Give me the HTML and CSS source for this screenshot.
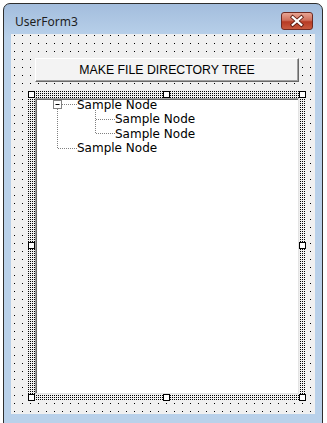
FILE: index.html
```html
<!DOCTYPE html>
<html>
<head>
<link rel="stylesheet" href="styles.css">
</head>
<body>

<div class="window">
  <div class="titlebar">
    <span class="title">UserForm3</span>
    <div class="close">
      <svg width="31" height="16" viewBox="0 0 31 16">
        <path d="M11 4 L20 12 M20 4 L11 12" stroke="#5a1a10" stroke-width="4" stroke-linecap="square"/>
        <path d="M11 4 L20 12 M20 4 L11 12" stroke="#ffffff" stroke-width="2.2" stroke-linecap="square"/>
      </svg>
    </div>
  </div>

  <div class="client">
    <div class="button">MAKE FILE DIRECTORY TREE</div>

    <div class="selection">
      <div class="tree">
        <svg class="lines" width="260" height="60">
          <g stroke="#808080" stroke-dasharray="1 1" fill="none">
            <path d="M25 4.5 H40"/>
            <path d="M20.5 9 V48"/>
            <path d="M21 48.5 H40"/>
            <path d="M58.5 10 V33"/>
            <path d="M59 19.5 H78"/>
            <path d="M59 33.5 H78"/>
          </g>
          <rect x="16.5" y="0.5" width="8" height="8" fill="#fff" stroke="#808080"/>
          <path d="M18.5 4.5 H22.5" stroke="#000"/>
        </svg>
        <div class="node root">Sample Node</div>
        <div class="node child">Sample Node</div>
        <div class="node child">Sample Node</div>
        <div class="node root">Sample Node</div>
      </div>
      <span class="handle tl"></span>
      <span class="handle tc"></span>
      <span class="handle tr"></span>
      <span class="handle ml"></span>
      <span class="handle mr"></span>
      <span class="handle bl"></span>
      <span class="handle bc"></span>
      <span class="handle br"></span>
    </div>
  </div>
</div>

</body>
</html>
```

FILE: styles.css
```css
body {
	margin: 0;
	background-color: #ffffff;
}

.window {
	margin: 3px 0 0 3px;
	width: 304px;
	height: 417px;
	padding: 0 7px 7px 7px;
	border: 1px solid #2e2e2e;
	border-radius: 7px 7px 0 0;
	background: linear-gradient(#a3bddd, #b9d1ea 34px);
	box-shadow: inset 0 -1px 0 #3fc6e6;
	display: flex;
	flex-direction: column;
}

.titlebar {
	height: 30px;
	display: flex;
	align-items: flex-start;
	justify-content: space-between;
}

.title {
	margin: 11px 0 0 4px;
	font-family: "Noto Sans", sans-serif;
	font-size: 12px;
	color: #1e1e1e;
	line-height: 14px;
}

.close {
	margin: 8px 2px 0 0;
	width: 30px;
	height: 16px;
	border: 1px solid #6e2a22;
	border-radius: 3px;
	background: linear-gradient(#e8a493, #d0705c 45%, #b73b24 55%, #c95a3f);
	display: flex;
}

.close svg {
	display: block;
}

.client {
	height: 380px;
	box-sizing: border-box;
	padding: 24px 0 0 17px;
	background-color: #f0f0f0;
	background-image:
		linear-gradient(to right, transparent 1px, #f0f0f0 1px),
		linear-gradient(to bottom, #000000 1px, #f0f0f0 1px);
	background-size: 8px 8px;
	background-position: 3px 1px;
}

.button {
	margin-left: 7px;
	width: 262px;
	height: 22px;
	border: 1px solid;
	border-color: #ffffff #696969 #696969 #ffffff;
	box-shadow: inset -1px -1px 0 #a0a0a0;
	background-color: #f3f3f3;
	font-family: "Liberation Sans", Arial, sans-serif;
	font-size: 12.3px;
	line-height: 22px;
	text-align: center;
	color: #000000;
}

.selection {
	position: relative;
	margin-top: 9px;
	width: 278px;
	height: 310px;
	box-sizing: border-box;
	padding: 7px;
	background-color: #f0f0f0;
	background-image:
		linear-gradient(to right, transparent 1px, #f0f0f0 1px),
		linear-gradient(to bottom, #000000 1px, #f0f0f0 1px);
	background-size: 2px 2px;
}

.tree {
	position: relative;
	height: 100%;
	box-sizing: border-box;
	border-top: 1px solid #a0a0a0;
	border-left: 1px solid #a0a0a0;
	border-right: 1px solid #e3e3e3;
	border-bottom: 1px solid #e3e3e3;
	box-shadow: inset 1px 1px 0 #696969;
	background-color: #ffffff;
	padding-top: 1px;
	font-family: "DejaVu Sans", sans-serif;
	font-size: 12px;
	color: #000000;
}

.lines {
	position: absolute;
	left: 1px;
	top: 1px;
}

.node {
	position: relative;
	line-height: 14.33px;
	height: 14.33px;
}

.node:first-of-type {
	margin-top: -2px;
}

.root {
	padding-left: 41px;
}

.child {
	padding-left: 79px;
}

.handle {
	position: absolute;
	width: 5px;
	height: 5px;
	border: 1px solid #000000;
	background-color: #ffffff;
}

.tl { left: 0; top: 0; }
.tc { left: calc(50% - 4px); top: 0; }
.tr { right: 0; top: 0; }
.ml { left: 0; top: calc(50% - 4px); }
.mr { right: 0; top: calc(50% - 4px); }
.bl { left: 0; bottom: 0; }
.bc { left: calc(50% - 4px); bottom: 0; }
.br { right: 0; bottom: 0; }
```
